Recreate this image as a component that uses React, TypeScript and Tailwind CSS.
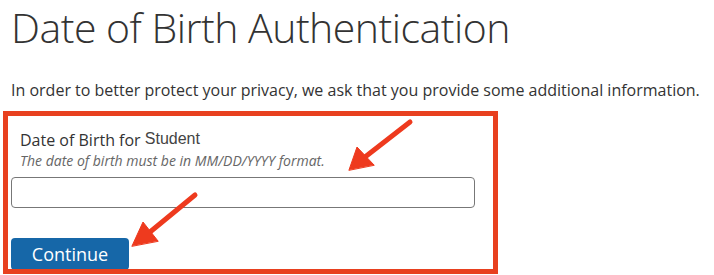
export default function App() {
  return (
    <div className="relative h-[275px] w-[714px] overflow-hidden bg-white pl-[11px] font-['Open_Sans',sans-serif] text-[#333]">
      <h1 className="mt-[3px] text-[41px] leading-[48px] font-light tracking-[-0.5px] text-[#333]">
        Date of Birth Authentication
      </h1>
      <p className="mt-[28px] text-[16px] leading-[22px] whitespace-nowrap">
        In order to better protect your privacy, we ask that you provide some additional information.
      </p>

      <form className="w-[464px]" onSubmit={(e) => e.preventDefault()}>
        <div className="mt-[27px] pl-[9px] text-[16px] leading-[22px]">
          Date of Birth for{" "}
          <span className="align-[2px] font-['Liberation_Sans',Arial,sans-serif] text-[16px] text-[#444]">
            Student
          </span>
        </div>
        <div className="pl-[9px] text-[14px] leading-[20px] text-[#666] italic">
          The date of birth must be in MM/DD/YYYY format.
        </div>
        <input
          type="text"
          className="mt-[6px] block h-[31px] w-[464px] rounded-[4px] border border-[#777] bg-white px-2 outline-none"
        />
        <button
          type="submit"
          className="mt-[30px] block h-[32px] w-[118px] rounded-[4px] bg-[#1667a8] text-[18px] leading-[32px] text-white"
        >
          Continue
        </button>
      </form>

      {/* annotation overlay */}
      <div className="pointer-events-none absolute top-[111px] left-[3px] h-[163px] w-[495px] border-[5px] border-[#e8401f]" />
      <svg
        className="pointer-events-none absolute top-0 left-0"
        width="714"
        height="275"
        viewBox="0 0 714 275"
      >
        <g fill="#ee3a1e" stroke="#ee3a1e" strokeLinecap="round">
          <line x1="410" y1="122" x2="365" y2="157" strokeWidth="5" />
          <polygon points="349,170 357,147 374,165" strokeWidth="1" strokeLinejoin="round" />
          <line x1="195" y1="195" x2="150" y2="232" strokeWidth="5" />
          <polygon points="132,246 143,222 158,241" strokeWidth="1" strokeLinejoin="round" />
        </g>
      </svg>
    </div>
  );
}
